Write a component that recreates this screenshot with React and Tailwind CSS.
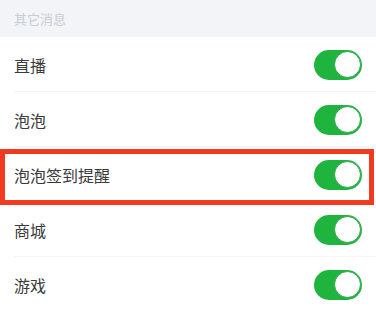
import React from "react";

const rows = ["直播", "泡泡", "泡泡签到提醒", "商城", "游戏"];

function Toggle() {
  return (
    <div className="relative h-[30px] w-[48px] rounded-full bg-[#1fb43d]">
      <div className="absolute right-[1px] top-[1.5px] h-[27px] w-[27px] rounded-full bg-white border border-[#2aa848]" />
    </div>
  );
}

export default function App() {
  return (
    <div
      className="w-[376px] h-[311px] overflow-hidden bg-white"
      style={{ fontFamily: '"Noto Sans CJK SC", "Noto Sans", sans-serif' }}
    >
      <div className="h-[37px] bg-[#f2f4f8] flex items-center pl-[14px] text-[13px] text-[#c9cdd4]">
        其它消息
      </div>
      {rows.map((r, i) => (
        <div key={r} className="relative h-[55px]">
          <div className="flex h-full items-center justify-between pl-[14px] pr-[14px]">
            <span className="text-[16px] text-[#3a3a3a]">{r}</span>
            <Toggle />
          </div>
          {i < rows.length - 1 && (
            <div className="absolute bottom-0 left-[14px] right-0 h-px bg-[#f5f5f5]" />
          )}
          {i === 2 && (
            <div className="absolute left-0 top-[2px] h-[56px] w-[374px] border-[5px] border-[#f23a20] z-10" />
          )}
        </div>
      ))}
    </div>
  );
}
